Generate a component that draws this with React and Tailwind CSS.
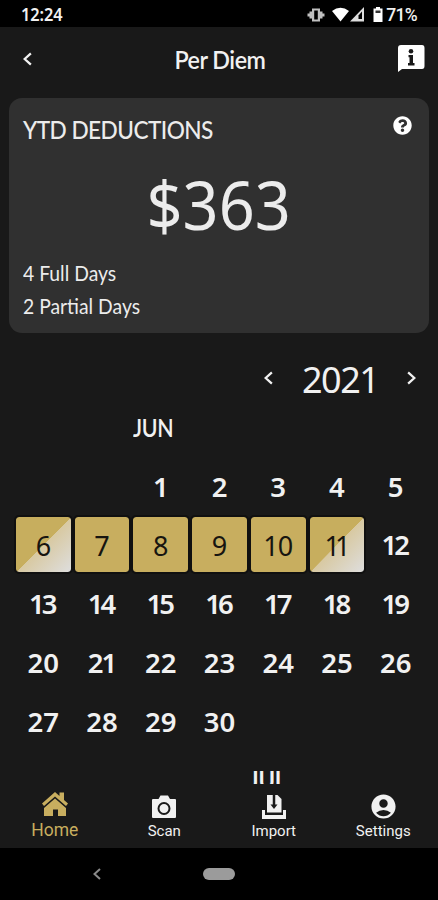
import { FaQuestionCircle } from "react-icons/fa";
import { MdAccountCircle } from "react-icons/md";

const days = Array.from({ length: 30 }, (_, i) => i + 1);

function Chevron({ className, flip }) {
  return (
    <svg className={className} viewBox="0 0 8 12" fill="none" stroke="currentColor" strokeWidth="2">
      <path d={flip ? "M1 1l5.5 5L1 11" : "M7 1L1.5 6 7 11"} />
    </svg>
  );
}

function StatusBar() {
  return (
    <header className="flex h-[27px] shrink-0 items-center justify-between bg-black pr-[21px] pl-[21px] pt-[3px]">
      <span className="origin-left scale-x-[0.96] font-['Noto_Sans',sans-serif] text-[17px] leading-6 font-semibold tracking-[-0.1px]">12:24</span>
      <div className="flex items-center pb-[1px]">
        <svg width="18" height="16" viewBox="0 0 18 16" className="mr-[7px]">
          <path d="M5 1.500h8v13H5zM2.500 4.500h2.500v7H2.500zM13 4.500h2.500v7H13zM.5 6.500h2v3h-2zM15.500 6.500h2v3h-2z" fill="#c0c0c0" />
          <path d="M7.200 3.500h3.600v9H7.200z" fill="#000" />
        </svg>
        <svg width="17" height="15" viewBox="0 0 17 15" className="mr-[1px]">
          <path d="M0 4Q8.500-2.500 17 4L8.500 14.500Z" fill="#fff" />
        </svg>
        <svg width="15" height="15" viewBox="0 0 15 15" className="mr-[8px]">
          <path d="M0 14.500L14 0V14.500Z" fill="#ddd" />
          <path d="M8.500 12V8.500L12 4.500V12Z" fill="#000" />
        </svg>
        <svg width="10" height="15" viewBox="0 0 10 15" className="mr-[3px]">
          <path d="M3 0h4v1.500h2.500V15H.5V1.500H3z" fill="#fff" />
          <path d="M2.500 3.500h5V6h-5z" fill="#333" />
        </svg>
        <span className="font-['Roboto',sans-serif] text-[17.500px] leading-6 font-medium tracking-[-0.7px]">71%</span>
      </div>
    </header>
  );
}

function TitleBar() {
  return (
    <div className="flex h-[71px] shrink-0 items-center justify-between pr-[13px] pl-[23px] pb-[6px]">
      <Chevron className="mb-[2px] h-[14px] w-[9px]" />
      <h1 className="ml-[10px] scale-x-[0.97] text-[24px] leading-8 font-semibold tracking-[-0.5px]">Per Diem</h1>
      <svg width="28" height="28" viewBox="0 0 28 28" className="mb-[4px]">
        <path d="M4 1H25Q27.500 1 27.500 4V22Q27.500 25 25 25H5L1 28V4Q1 1 4 1Z" fill="#fff" />
        <circle cx="14" cy="7.300" r="2.300" fill="#191919" />
        <path d="M11.500 11H16V19H17.500V21.500H11V19H12.500V13.300H11.500Z" fill="#191919" />
      </svg>
    </div>
  );
}

function Deductions() {
  return (
    <section className="mx-[9px] flex h-[235px] shrink-0 flex-col rounded-[13px] bg-[#303030] px-[14px] text-[#ececec]">
      <div className="flex h-[64px] items-start justify-between pt-[15px] pr-[3px]">
        <h2 className="origin-left scale-x-[0.905] text-[25px] leading-8 font-medium tracking-[-0.6px]">YTD DEDUCTIONS</h2>
        <FaQuestionCircle className="mt-[3px] size-[19px] text-white" />
      </div>
      <div className="flex h-[94px] items-center justify-center pb-[9px] font-['Noto_Sans',sans-serif] text-[67px] leading-none">
        <span className="scale-x-[0.94]">$363</span>
      </div>
      <div className="flex flex-col items-start text-[21px] leading-[33px]">
        <span className="origin-left scale-x-[0.92]">4 Full Days</span>
        <span className="origin-left scale-x-[0.92]">2 Partial Days</span>
      </div>
    </section>
  );
}

const partial =
  "bg-[linear-gradient(to_bottom_right,#c7ae5e_0%,#c7ae5e_50%,#d8c9a2_50.500%,#dedede_100%)]";

// Tightens the space that the narrow figure 1 leaves on either side.
function spacing(n) {
  if (n === 11) return "mr-[4px] tracking-[-5px]";
  if (n === 10) return "mr-[1px] tracking-[-1px]";
  if (n > 11 && n < 20) return "mr-[3px] tracking-[-3px]";
  if (n === 21) return "mr-[1px] tracking-[-2px]";
  return "";
}

function Day({ n }) {
  const full = n >= 7 && n <= 10;
  const half = n === 6 || n === 11;
  if (full || half) {
    return (
      <div
        className={
          "flex items-center justify-center rounded-[3px] pt-[2px] font-['Noto_Sans',sans-serif] text-[27px] leading-none text-[#171510] outline-2 outline-[#101010] " +
          (half ? partial : "bg-[#c8ae5f]")
        }
      >
        <span className={spacing(n)}>{n}</span>
      </div>
    );
  }
  return (
    <div className="flex items-center justify-center pt-[2px] font-['Noto_Sans',sans-serif] text-[27.500px] leading-none font-semibold">
      <span className={spacing(n)}>{n}</span>
    </div>
  );
}

function Calendar() {
  return (
    <main className="flex min-h-0 flex-1 flex-col overflow-hidden">
      <div className="flex h-[68px] shrink-0 items-end justify-end pr-[22px]">
        <Chevron className="mb-[16px] h-[14px] w-[9px]" />
        <span className="mx-[29px] w-[76px] text-center font-['Noto_Sans',sans-serif] text-[36px] leading-[42px] whitespace-nowrap tracking-[-1.500px]">2021</span>
        <Chevron className="mb-[16px] h-[14px] w-[9px]" flip />
      </div>
      <div className="grid h-[57px] shrink-0 grid-cols-7 gap-x-1 px-4 pt-[11px]">
        <span className="col-start-3 origin-left scale-x-[0.89] text-[24px] leading-8 font-semibold tracking-[-0.4px]">JUN</span>
      </div>
      <div className="grid h-[290px] shrink-0 grid-cols-7 grid-rows-5 gap-1 px-4 pr-[15px]">
        <span className="col-span-2" />
        {days.map((n) => (
          <Day key={n} n={n} />
        ))}
      </div>
      <div className="mt-[20px] grid h-[16px] grid-cols-7 gap-x-1 overflow-hidden px-4">
        <span className="col-start-5 ml-[-1px] origin-left scale-x-[0.93] text-[24px] leading-[24px] font-bold tracking-[-0.2px]">JUL</span>
      </div>
    </main>
  );
}

function HomeIcon() {
  return (
    <svg width="28" height="26" viewBox="0 0 28 26" fill="currentColor">
      <path d="M14 1L18.500 5V1.500H23V9L27 12.500L25 15L14 5.500L3 15L1 12.500Z" />
      <path d="M14 7.500L25 17V25H17V18.500H12V25H3V17Z" />
    </svg>
  );
}

function CameraIcon() {
  return (
    <svg width="24" height="24" viewBox="0 0 24 24">
      <path d="M1 4H6.500L8.500 .5H16L18 4H23Q24 4 24 5V22Q24 23 23 23H1Q0 23 0 22V5Q0 4 1 4Z" fill="currentColor" />
      <circle cx="12" cy="13.500" r="5.500" fill="none" stroke="#191919" strokeWidth="2" />
    </svg>
  );
}

function ImportIcon() {
  return (
    <svg width="24" height="26" viewBox="0 0 24 26">
      <path d="M5 1H15.500L19.500 5V18.500H5Z" fill="currentColor" />
      <path d="M0 16H3V21H21V16H24V25H0Z" fill="currentColor" />
      <path d="M12 1V12" fill="none" stroke="#191919" strokeWidth="2.500" />
      <path d="M8.500 10.500H15.500L12 15Z" fill="#191919" />
    </svg>
  );
}

function Nav() {
  return (
    <nav className="grid h-[64px] shrink-0 grid-cols-4 font-['Roboto',sans-serif] text-[15px] leading-[18px]">
      <div className="flex flex-col items-center pt-[7px] text-[#c8ae5f]">
        <HomeIcon />
        <span className="mt-[4px] text-[17.500px]">Home</span>
      </div>
      <div className="flex flex-col items-center pt-[11px]">
        <CameraIcon />
        <span className="mt-[3px]">Scan</span>
      </div>
      <div className="flex flex-col items-center pt-[10px]">
        <ImportIcon />
        <span className="mt-[2px]">Import</span>
      </div>
      <div className="flex flex-col items-center pt-[8px]">
        <MdAccountCircle className="size-[29px]" />
        <span className="mt-[1px]">Settings</span>
      </div>
    </nav>
  );
}

export default function App() {
  return (
    <div className="flex h-[900px] w-[438px] flex-col overflow-hidden bg-[#191919] font-['Lato',sans-serif] text-[#f1f1f1]">
      <StatusBar />
      <TitleBar />
      <Deductions />
      <Calendar />
      <Nav />
      <footer className="grid h-[52px] shrink-0 grid-cols-[1fr_32px_1fr] items-center bg-black">
        <Chevron className="ml-[93px] h-[12px] w-[8px] text-[#8a8a8a]" />
        <span className="h-[12px] rounded-full bg-[#9b9b9b]" />
      </footer>
    </div>
  );
}
